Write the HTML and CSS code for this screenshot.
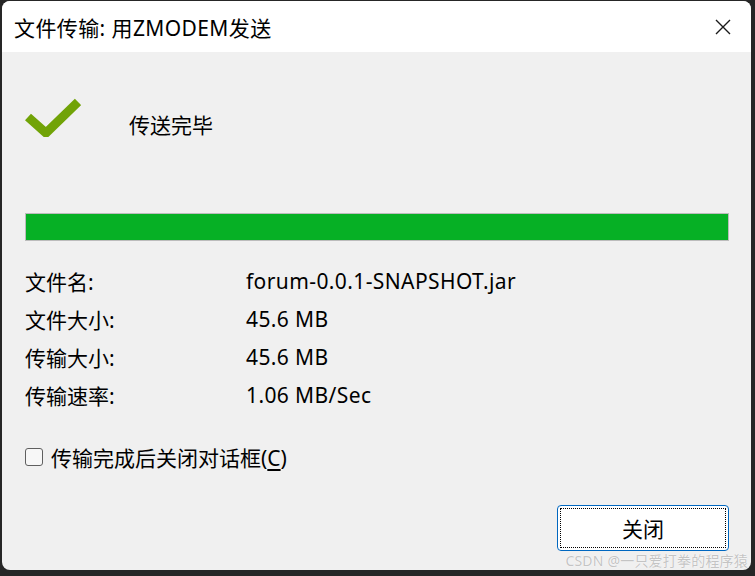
FILE: index.html
```html
<!DOCTYPE html>
<html lang="zh-CN">
<head>
  <meta charset="UTF-8" />
  <title>文件传输: 用ZMODEM发送</title>
  <link rel="stylesheet" href="styles.css">
</head>
<body>
  <div class="window">
    <div class="titlebar">
      <span class="title">文件传输: 用ZMODEM发送</span>
      <svg class="close" width="16" height="16" viewBox="0 0 16 16">
        <path d="M1 1 L15 15 M15 1 L1 15" stroke="#1a1a1a" stroke-width="1.4" fill="none"/>
      </svg>
    </div>

    <div class="content">
      <div class="status">
        <svg class="check" width="56" height="40" viewBox="0 0 56 40">
          <path d="M3 20 L21 36 L53 5" stroke="#71a307" stroke-width="9" fill="none"/>
        </svg>
        <span class="status-text">传送完毕</span>
      </div>

      <div class="progress"><div class="progress-fill"></div></div>

      <div class="info">
        <div class="info-row"><span class="label">文件名:</span><span class="value">forum-0.0.1-SNAPSHOT.jar</span></div>
        <div class="info-row"><span class="label">文件大小:</span><span class="value">45.6 MB</span></div>
        <div class="info-row"><span class="label">传输大小:</span><span class="value">45.6 MB</span></div>
        <div class="info-row"><span class="label">传输速率:</span><span class="value">1.06 MB/Sec</span></div>
      </div>

      <label class="option">
        <span class="box"></span>
        <span>传输完成后关闭对话框(<u>C</u>)</span>
      </label>

      <div class="footer">
        <button class="close-btn"><span class="focus">关闭</span></button>
      </div>
    </div>
    <div class="watermark">CSDN @一只爱打拳的程序猿</div>
  </div>
</body>
</html>
```

FILE: styles.css
```css
body {
  margin: 0;
  background: #262626;
  font-family: "Noto Sans", "Noto Sans CJK SC", sans-serif;
  color: #000;
  width: 755px;
  height: 576px;
  overflow: hidden;
}
.window {
  position: relative;
  margin: 1px 0 0 2px;
  width: 749px;
  height: 569px;
  background: #f0f0f0;
  border-radius: 8px;
  overflow: hidden;
  display: flex;
  flex-direction: column;
}
.titlebar {
  height: 51px;
  background: #fff;
  display: flex;
  align-items: center;
  justify-content: space-between;
  padding: 0 20px 0 12px;
}
.title {
  font-size: 21px;
  letter-spacing: 0.4px;
}
.close {
  margin-top: 1px;
}
.content {
  flex: 1;
  padding: 0 22px 0 23px;
  display: flex;
  flex-direction: column;
}
.status {
  display: flex;
  align-items: center;
  margin-top: 45px;
  height: 40px;
}
.status-text {
  margin-left: 48px;
  font-size: 21px;
  margin-top: 14px;
}
.progress {
  margin-top: 76px;
  height: 26px;
  border: 1px solid #bcbcbc;
  background: #e6e6e6;
}
.progress-fill {
  height: 100%;
  width: 100%;
  background: #06b025;
}
.info {
  margin-top: 21px;
}
.info-row {
  display: flex;
  height: 38px;
  align-items: center;
  font-size: 21px;
}
.label {
  width: 221px;
}
.value {
  letter-spacing: 0.4px;
}
.option {
  display: flex;
  align-items: center;
  margin-top: 31px;
  height: 24px;
  font-size: 21px;
}
.box {
  width: 16px;
  height: 16px;
  border: 1px solid #5f5f5f;
  border-radius: 3px;
  background: #f7f7f7;
  margin-right: 8px;
}
.option u {
  text-underline-offset: 3px;
}
.footer {
  display: flex;
  justify-content: flex-end;
  margin-top: 36px;
}
.close-btn {
  width: 172px;
  height: 46px;
  padding: 2px;
  background: #fff;
  border: 1px solid #0067c0;
  border-radius: 4px;
  font-family: inherit;
  font-size: 21px;
  color: #000;
}
.focus {
  display: flex;
  align-items: center;
  justify-content: center;
  height: 100%;
  border: 1px dotted #000;
  box-sizing: border-box;
}
.watermark {
  position: absolute;
  right: 3px;
  bottom: 0;
  font-size: 14px;
  letter-spacing: 0.2px;
  color: #c4c4c4;
  text-shadow: 0 0 1px #fff, 0 0 1px #fff;
}
```
